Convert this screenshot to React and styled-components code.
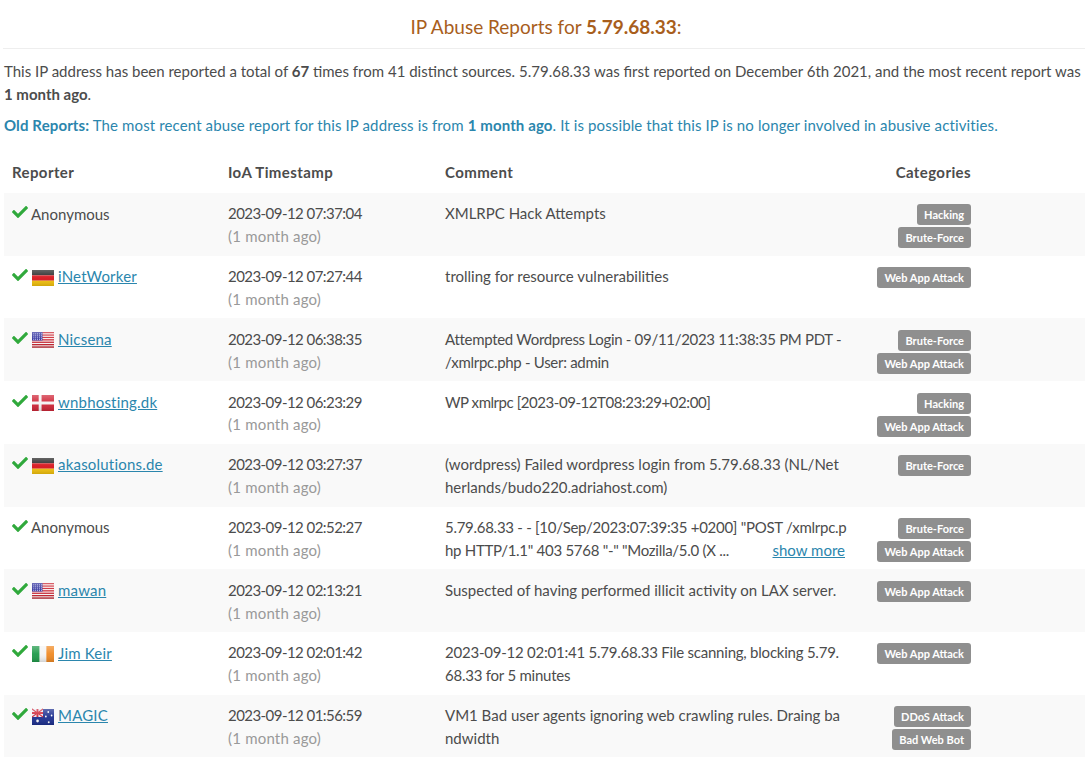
import React from "react";
import styled, { createGlobalStyle } from "styled-components";
import { FaCheck } from "react-icons/fa";

const GlobalStyle = createGlobalStyle`
  html, body {
    margin: 0;
    padding: 0;
    background: #fff;
  }
  body {
    font-family: "Lato", "Open Sans", sans-serif;
    font-size: 15px;
    line-height: 22.857px;
    color: #4c4c4c;
    overflow: hidden;
  }
  * {
    box-sizing: border-box;
  }
`;

const Page = styled.div`
  width: 1081px;
  margin-left: 4px;
`;

const Title = styled.h3`
  margin: 0 0 0 -1px;
  padding: 14px 0 8px 4px;
  font-size: 19px;
  line-height: 26px;
  font-weight: 400;
  text-align: center;
  color: #a85e1c;
  border-bottom: 1px solid #eee;
`;

const Para = styled.p`
  margin: 0 0 8px;
  letter-spacing: ${(p) => (p.$info ? "0.12px" : "0")};
  color: ${(p) => (p.$info ? "#2b86ad" : "inherit")};
`;

const Intro = styled(Para)`
  margin-top: 11px;
`;

const Table = styled.table`
  width: 100%;
  margin-top: 16px;
  border-collapse: collapse;
  table-layout: fixed;
`;

const Th = styled.th`
  padding: 8px 8px 9px;
  text-align: ${(p) => (p.$right ? "right" : "left")};
  width: ${(p) => p.$width}px;
  font-weight: 700;
  letter-spacing: 0.4px;
`;

const Row = styled.tr`
  background: ${(p) => (p.$odd ? "#f9f9f9" : "#fff")};
`;

const Td = styled.td`
  padding: 9px 8px 7px;
  border-top: 1px solid transparent;
  vertical-align: top;
`;

const CategoryCell = styled(Td)`
  padding: 11px 8px 0;
  text-align: right;
`;

const Reporter = styled.div`
  display: flex;
  align-items: center;
  gap: 3px;
  height: 23px;
`;

const Check = styled(FaCheck)`
  width: 16px;
  height: 16px;
  margin-top: -3px;
  flex: none;
  color: #30a93c;
`;

const FlagBox = styled.svg`
  width: 22px;
  height: 18px;
  flex: none;
  margin: 2px 1px 0;
`;

const ReporterLink = styled.a`
  color: #2b86ad;
  text-decoration: underline;
  letter-spacing: 0.2px;
`;

const Time = styled.div`
  letter-spacing: -0.55px;
`;

const Muted = styled.div`
  color: #999;
  letter-spacing: 0.2px;
`;

const CommentLine = styled.div`
  white-space: pre;
  letter-spacing: ${(p) => p.$tight || 0}px;
`;

const ShowMore = styled.a`
  float: right;
  color: #2b86ad;
  text-decoration: underline;
  letter-spacing: 0;
`;

const Tag = styled.span`
  display: inline-block;
  padding: 0 7px;
  height: 21px;
  line-height: 21px;
  border-radius: 3px;
  background: #8f8f8f;
  color: #fff;
  font-size: 11px;
  font-weight: 700;
  white-space: nowrap;
`;

const TagLine = styled.div`
  height: 23px;
  line-height: 0;
`;

const Flag = ({ code }) => {
  const id = `gloss-${code}`;
  return (
    <FlagBox viewBox="0 0 23 18" preserveAspectRatio="none" aria-hidden="true">
      <defs>
        <linearGradient id={id} x1="0" y1="0" x2="0" y2="1">
          <stop offset="0" stopColor="#fff" stopOpacity="0.3" />
          <stop offset="0.5" stopColor="#fff" stopOpacity="0.05" />
          <stop offset="1" stopColor="#000" stopOpacity="0.14" />
        </linearGradient>
      </defs>
      {code === "de" && (
        <>
          <rect x="0" y="1" width="23" height="5.3" fill="#222" />
          <rect x="0" y="6.3" width="23" height="5.4" fill="#d8141c" />
          <rect x="0" y="11.7" width="23" height="5.3" fill="#f3c20c" />
        </>
      )}
      {code === "us" && (
        <>
          <rect x="0" y="1" width="23" height="16" fill="#fff" />
          {[1, 3.4, 5.8, 8.2, 10.6, 13, 15.4].map((y) => (
            <rect key={y} x="0" y={y} width="23" height="1.3" fill="#c8202c" />
          ))}
          <rect x="0" y="1" width="11" height="8.5" fill="#2f2f9c" />
          {[2.4, 4.4, 6.4, 8.2].map((y) =>
            [1.4, 3.4, 5.4, 7.4, 9.4].map((x) => (
              <rect key={`${x}-${y}`} x={x} y={y} width="0.9" height="0.9" fill="#dfe3ff" />
            ))
          )}
        </>
      )}
      {code === "dk" && (
        <>
          <rect x="0" y="1" width="23" height="16" fill="#cf2638" />
          <rect x="7" y="1" width="3" height="16" fill="#f4f4f4" />
          <rect x="0" y="7.5" width="23" height="3" fill="#f4f4f4" />
        </>
      )}
      {code === "ie" && (
        <>
          <rect x="0" y="1" width="8" height="16" fill="#1f9a4a" />
          <rect x="8" y="1" width="7" height="16" fill="#f4f4f4" />
          <rect x="15" y="1" width="8" height="16" fill="#f08a24" />
        </>
      )}
      {code === "au" && (
        <>
          <rect x="0" y="1" width="23" height="16" fill="#1c2f8f" />
          <rect x="0" y="1" width="11.5" height="8" fill="#e8e8f4" />
          <path d="M0 1l11.5 8M11.5 1L0 9" stroke="#cf2638" strokeWidth="1.2" />
          <rect x="4.7" y="1" width="2" height="8" fill="#cf2638" />
          <rect x="0" y="4" width="11.5" height="2" fill="#cf2638" />
          <circle cx="5.8" cy="13" r="1.4" fill="#fff" />
          <circle cx="17" cy="4" r="0.9" fill="#fff" />
          <circle cx="20.5" cy="7.5" r="0.9" fill="#fff" />
          <circle cx="14.5" cy="8.5" r="0.9" fill="#fff" />
          <circle cx="17.5" cy="14.2" r="1" fill="#fff" />
        </>
      )}
      <rect x="0" y="1" width="23" height="16" fill={`url(#${id})`} />
    </FlagBox>
  );
};

const reports = [
  { name: "Anonymous", time: "2023-09-12 07:37:04", comment: ["XMLRPC Hack Attempts"], tags: ["Hacking", "Brute-Force"] },
  { name: "iNetWorker", flag: "de", time: "2023-09-12 07:27:44", comment: ["trolling for resource vulnerabilities"], tags: ["Web App Attack"] },
  { name: "Nicsena", flag: "us", time: "2023-09-12 06:38:35", tight: -0.3, comment: ["Attempted Wordpress Login - 09/11/2023 11:38:35 PM PDT -", "/xmlrpc.php - User: admin"], tags: ["Brute-Force", "Web App Attack"] },
  { name: "wnbhosting.dk", flag: "dk", time: "2023-09-12 06:23:29", tight: -0.45, comment: ["WP xmlrpc [2023-09-12T08:23:29+02:00]"], tags: ["Hacking", "Web App Attack"] },
  { name: "akasolutions.de", flag: "de", time: "2023-09-12 03:27:37", comment: ["(wordpress) Failed wordpress login from 5.79.68.33 (NL/Net", "herlands/budo220.adriahost.com)"], tags: ["Brute-Force"] },
  { name: "Anonymous", time: "2023-09-12 02:52:27", tight: -0.28, comment: ['5.79.68.33 - - [10/Sep/2023:07:39:35 +0200] "POST /xmlrpc.p', 'hp HTTP/1.1" 403 5768 "-" "Mozilla/5.0 (X ...'], more: true, tags: ["Brute-Force", "Web App Attack"] },
  { name: "mawan", flag: "us", time: "2023-09-12 02:13:21", comment: ["Suspected of having performed illicit activity on LAX server."], tags: ["Web App Attack"] },
  { name: "Jim Keir", flag: "ie", time: "2023-09-12 02:01:42", tight: -0.23, comment: ["2023-09-12 02:01:41 5.79.68.33 File scanning, blocking 5.79.", "68.33 for 5 minutes"], tags: ["Web App Attack"] },
  { name: "MAGIC", flag: "au", time: "2023-09-12 01:56:59", comment: ["VM1 Bad user agents ignoring web crawling rules. Draing ba", "ndwidth"], tags: ["DDoS Attack", "Bad Web Bot"] },
];

export default function App() {
  return (
    <Page>
      <GlobalStyle />
      <Title>
        IP Abuse Reports for <b>5.79.68.33</b>:
      </Title>
      <Intro>
        This IP address has been reported a total of <b>67</b> times from 41 distinct sources. 5.79.68.33 was first
        reported on December 6th 2021, and the most recent report was <b>1 month ago</b>.
      </Intro>
      <Para $info>
        <b>Old Reports:</b> The most recent abuse report for this IP address is from <b>1 month ago</b>. It is possible
        that this IP is no longer involved in abusive activities.
      </Para>
      <Table>
        <thead>
          <tr>
            <Th $width={216}>Reporter</Th>
            <Th $width={217}>IoA Timestamp</Th>
            <Th $width={416}>Comment</Th>
            <Th $width={126} $right>Categories</Th>
            <Th $width={106} />
          </tr>
        </thead>
        <tbody>
          {reports.map((r, i) => (
            <Row key={r.time} $odd={i % 2 === 0}>
              <Td>
                <Reporter>
                  <Check />
                  {r.flag && <Flag code={r.flag} />}
                  {r.flag ? <ReporterLink href="#">{r.name}</ReporterLink> : r.name}
                </Reporter>
              </Td>
              <Td>
                <Time>{r.time}</Time>
                <Muted>(1 month ago)</Muted>
              </Td>
              <Td>
                {r.comment.map((line, n) => (
                  <CommentLine key={line} $tight={r.tight}>
                    {r.more && n === 1 && <ShowMore href="#">show more</ShowMore>}
                    {line}
                  </CommentLine>
                ))}
              </Td>
              <CategoryCell>
                {r.tags.map((t) => (
                  <TagLine key={t}>
                    <Tag>{t}</Tag>
                  </TagLine>
                ))}
              </CategoryCell>
              <Td />
            </Row>
          ))}
        </tbody>
      </Table>
    </Page>
  );
}
